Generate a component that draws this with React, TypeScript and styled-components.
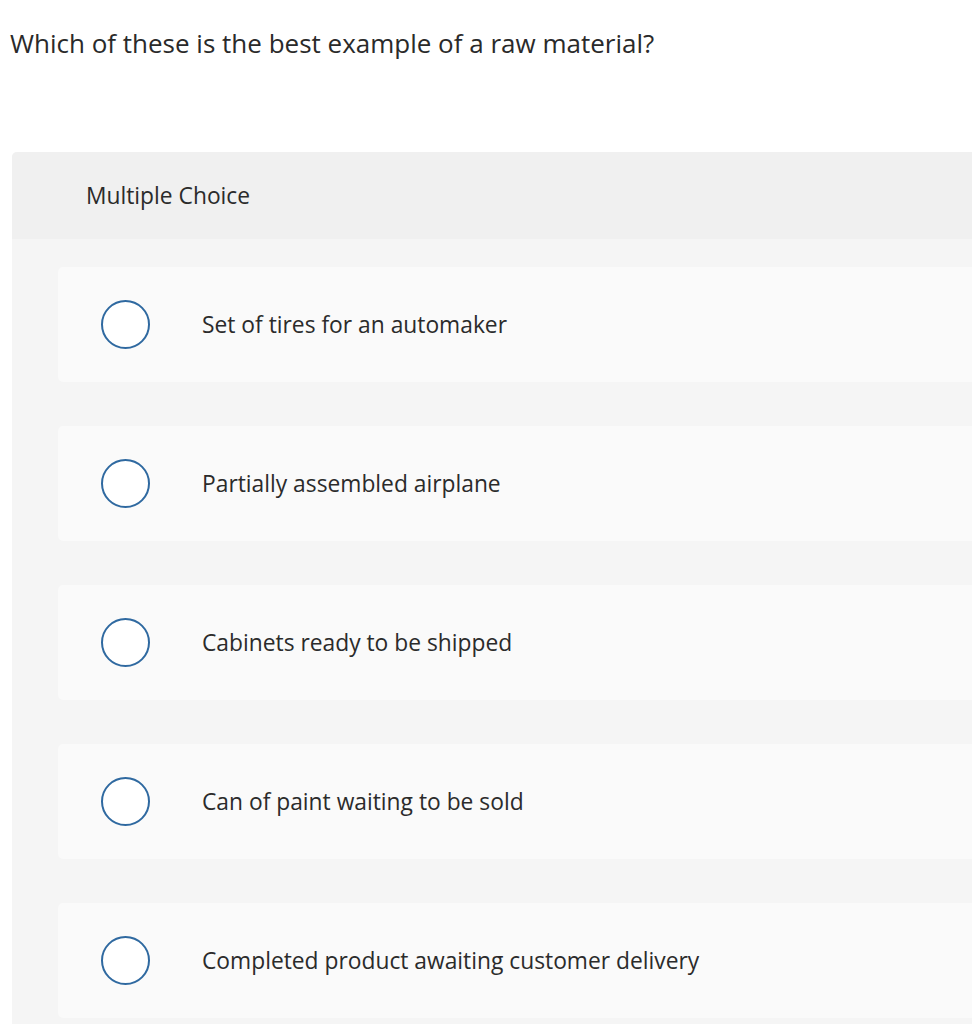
import React from 'react';
import styled, { createGlobalStyle } from "styled-components";

const GlobalStyle = createGlobalStyle`
  html, body {
    margin: 0;
    padding: 0;
    background: #ffffff;
    overflow-x: hidden;
  }
  body {
    font-family: "Open Sans", Lato, "Liberation Sans", sans-serif;
    color: #333333;
  }
`;

const Page = styled.main`
  padding-top: 26px;
`;

const Question = styled.h1`
  margin: 0 0 0 10px;
  font-size: 26px;
  font-weight: 400;
  line-height: 34px;
  color: #2a2a2a;
`;

const Panel = styled.section`
  margin: 92px -40px 0 12px;
  border-radius: 5px 0 0 0;
  overflow: hidden;
  background: #f5f5f5;
`;

const PanelHeader = styled.div`
  display: flex;
  align-items: center;
  height: 87px;
  padding-left: 74px;
  background: #f0f0f0;
  font-size: 22.8px;
  color: #2b2b2b;
`;

const OptionList = styled.ul`
  list-style: none;
  margin: 0;
  padding: 28px 0 10px 46px;
  display: flex;
  flex-direction: column;
  gap: 44px;
`;

const Option = styled.li`
  display: flex;
  align-items: center;
  height: 115px;
  padding-left: 43px;
  border-radius: 5px 0 0 5px;
  background: #fafafa;
  cursor: pointer;
`;

const Radio = styled.span`
  flex-shrink: 0;
  box-sizing: border-box;
  width: 49px;
  height: 49px;
  border: 2px solid #2f69a0;
  border-radius: 50%;
  background: #ffffff;
`;

const Label = styled.span`
  margin-left: 52px;
  font-size: 22.8px;
  color: #2b2b2b;
`;

const options = [
  'Set of tires for an automaker',
  'Partially assembled airplane',
  'Cabinets ready to be shipped',
  'Can of paint waiting to be sold',
  'Completed product awaiting customer delivery',
];

const App = () => {
  return (
    <>
      <GlobalStyle />
      <Page>
        <Question>Which of these is the best example of a raw material?</Question>
        <Panel>
          <PanelHeader>Multiple Choice</PanelHeader>
          <OptionList>
            {options.map((text) => (
              <Option key={text}>
                <Radio />
                <Label>{text}</Label>
              </Option>
            ))}
          </OptionList>
        </Panel>
      </Page>
    </>
  );
};

export default App;
